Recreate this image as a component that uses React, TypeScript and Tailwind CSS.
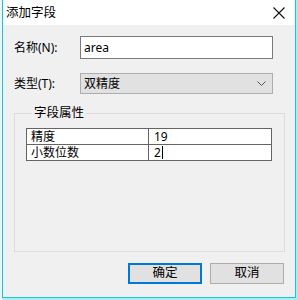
import { useState } from "react";

const font = { fontFamily: '"Noto Sans", "Noto Sans CJK SC", sans-serif' };

export default function App() {
  const [name, setName] = useState("area");

  return (
    <div className="w-[297px] h-[300px] bg-[#a9eef2] flex overflow-hidden" style={font}>
      <div className="w-[2px] shrink-0 bg-[#e9f6f8]" />
      <div className="w-[294px] h-[298px] shrink-0 flex flex-col border-l border-r border-b border-[#19c6d6] bg-[#f0f0f0] text-[12px] text-black leading-[16px]">
        {/* title bar */}
        <div className="h-[25px] shrink-0 bg-white flex items-center justify-between pl-[3px] pr-[10px]">
          <span className="text-[12.5px] pt-[1px]">添加字段</span>
          <svg width="12" height="12" viewBox="0 0 12 12" className="mt-[1px]">
            <path d="M0.5 0.5 L11.5 11.5 M11.5 0.5 L0.5 11.5" stroke="#111" strokeWidth="1.1" />
          </svg>
        </div>

        <div className="flex flex-col flex-1 pl-[11px] pr-[10px] pt-[11px]">
          <div className="flex items-center">
            <label className="w-[66px] shrink-0">名称(N):</label>
            <input
              value={name}
              onChange={(e) => setName(e.target.value)}
              className="w-[193px] h-[23px] border border-[#7a7a7a] bg-white px-[3px] outline-none text-[12px]"
            />
          </div>

          <div className="flex items-center mt-[14px]">
            <label className="w-[66px] shrink-0">类型(T):</label>
            <div className="w-[193px] h-[21px] border border-[#adadad] bg-[#e1e1e1] flex items-center justify-between pl-[3px] pr-[6px]">
              <span>双精度</span>
              <svg width="9" height="5" viewBox="0 0 9 5">
                <path d="M0.5 0.5 L4.5 4.5 L8.5 0.5" stroke="#555" fill="none" strokeWidth="1" />
              </svg>
            </div>
          </div>

          <fieldset className="mt-[11px] w-[271px] h-[147px] border border-[#dcdcdc] pl-[11px]">
            <legend className="ml-[6px] px-[2px] text-[12.5px]">字段属性</legend>
            <table className="mt-[7px] w-[246px] border-collapse border border-[#646464] table-fixed">
              <tbody>
                <tr className="h-[16px]">
                  <td className="w-[122px] border border-[#646464] bg-white pl-[4px] py-0 leading-[14px]">精度</td>
                  <td className="border border-[#646464] bg-white pl-[5px] py-0 leading-[14px]">19</td>
                </tr>
                <tr className="h-[16px]">
                  <td className="border border-[#646464] bg-white pl-[4px] py-0 leading-[14px]">小数位数</td>
                  <td className="border border-[#646464] bg-white pl-[5px] py-0 leading-[14px]">
                    <span className="inline-flex items-center">
                      2<span className="inline-block w-[1px] h-[13px] bg-black ml-[1px]" />
                    </span>
                  </td>
                </tr>
              </tbody>
            </table>
          </fieldset>

          <div className="flex justify-end gap-[8px] mt-[11px] pr-[1px]">
            <button className="w-[74px] h-[21px] border-2 border-[#0078d7] bg-[#e1e1e1] text-[12.5px] leading-none">确定</button>
            <button className="w-[74px] h-[21px] border border-[#adadad] bg-[#e1e1e1] text-[12.5px] leading-none">取消</button>
          </div>
        </div>
      </div>
    </div>
  );
}
